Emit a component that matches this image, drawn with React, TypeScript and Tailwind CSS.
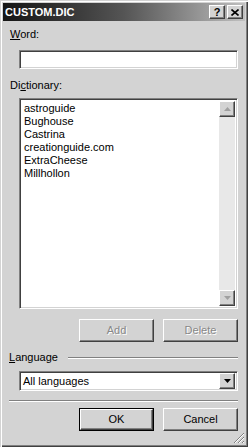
import React from 'react';

const raised =
  'bg-[#d3d3d3] border border-t-white border-l-white border-r-[#404040] border-b-[#404040] shadow-[inset_-1px_-1px_0_#808080]';
const sunken =
  'border border-t-[#808080] border-l-[#808080] border-r-white border-b-white shadow-[inset_1px_1px_0_#404040,inset_-1px_-1px_0_#d3d3d3]';

const Arrow = ({ up, disabled }: { up?: boolean; disabled?: boolean }) => (
  <svg width="7" height="4" viewBox="0 0 7 4" className={up ? '' : 'rotate-180'}>
    <path d="M3.5 0 L7 4 L0 4 Z" fill={disabled ? '#a0a0a0' : '#000'} />
  </svg>
);

const ScrollBtn = ({ up }: { up?: boolean }) => (
  <div className={`${raised} w-[16px] h-[16px] flex items-center justify-center`}>
    <Arrow up={up} disabled />
  </div>
);

const Button = ({
  label,
  disabled,
  isDefault,
}: {
  label: string;
  disabled?: boolean;
  isDefault?: boolean;
}) => (
  <div className={`w-[75px] h-[23px] ${isDefault ? 'border border-black' : ''}`}>
    <div
      className={`${raised} w-full h-full flex items-center justify-center ${
        disabled ? 'text-[#888888] [text-shadow:1px_1px_0_#ffffff]' : 'text-black'
      }`}
    >
      {label}
    </div>
  </div>
);

const words = ['astroguide', 'Bughouse', 'Castrina', 'creationguide.com', 'ExtraCheese', 'Millhollon'];

export default function App() {
  return (
    <div className="w-[248px] h-[447px] bg-[#d3d3d3] p-[3px] relative flex flex-col font-['Liberation_Sans',Arial,sans-serif] text-[11px] leading-[13px] text-black shadow-[inset_1px_1px_0_#d3d3d3,inset_2px_2px_0_#ffffff,inset_-1px_-1px_0_#404040,inset_-2px_-2px_0_#808080]">
      {/* Title bar */}
      <div className="h-[18px] flex items-center bg-gradient-to-r from-[#161616] via-[#555555] to-[#c0c0c0] pl-[2px] pr-[2px]">
        <span className="text-white font-bold text-[11px] flex-1">CUSTOM.DIC</span>
        <div className="flex gap-[2px]">
          <div className={`${raised} w-[16px] h-[14px] flex items-center justify-center font-bold text-[11px] leading-none`}>
            ?
          </div>
          <div className={`${raised} w-[16px] h-[14px] flex items-center justify-center`}>
            <svg width="8" height="7" viewBox="0 0 8 7">
              <path d="M0.5 0.5 L7.5 6.5 M7.5 0.5 L0.5 6.5" stroke="#000" strokeWidth="1.6" />
            </svg>
          </div>
        </div>
      </div>

      {/* Word */}
      <div className="mt-[7px] ml-[7px]">
        <span className="underline">W</span>ord:
      </div>
      <div className={`${sunken} bg-white mt-[9px] ml-[16px] w-[219px] h-[19px]`} />

      {/* Dictionary */}
      <div className="mt-[10px] ml-[7px]">
        Di<span className="underline">c</span>tionary:
      </div>
      <div className={`${sunken} bg-white mt-[6px] ml-[16px] w-[219px] h-[211px] p-[2px] flex`}>
        <div className="flex-1 pl-[2px] pt-[1px]">
          {words.map((w) => (
            <div key={w}>{w}</div>
          ))}
        </div>
        <div className="w-[16px] flex flex-col bg-[#e8e8e8]">
          <ScrollBtn up />
          <div className="flex-1" />
          <ScrollBtn />
        </div>
      </div>

      {/* Add / Delete */}
      <div className="mt-[10px] ml-[76px] flex gap-[9px]">
        <Button label="Add" disabled />
        <Button label="Delete" disabled />
      </div>

      {/* Language */}
      <div className="mt-[9px] ml-[6px] mr-[7px] flex items-center">
        <span className="mr-[10px]">
          <span className="underline">L</span>anguage
        </span>
        <div className="flex-1 border-t border-t-[#808080] border-b border-b-white" />
      </div>
      <div className={`${sunken} bg-white mt-[7px] ml-[16px] w-[219px] h-[20px] p-[2px] flex items-center`}>
        <span className="flex-1 pl-[1px]">All languages</span>
        <div className={`${raised} w-[16px] h-[16px] flex items-center justify-center`}>
          <Arrow />
        </div>
      </div>

      {/* Separator */}
      <div className="mt-[9px] ml-[6px] w-[229px] border-t border-t-[#808080] border-b border-b-white" />

      {/* OK / Cancel */}
      <div className="mt-[6px] ml-[76px] flex gap-[9px]">
        <Button label="OK" isDefault />
        <Button label="Cancel" />
      </div>

      {/* Size grip */}
      <svg width="12" height="12" viewBox="0 0 12 12" className="absolute right-[3px] bottom-[3px]">
        <path d="M11 1 L1 11 M11 5 L5 11 M11 9 L9 11" stroke="#808080" strokeWidth="1" />
        <path d="M11 2 L2 11 M11 6 L6 11 M11 10 L10 11" stroke="#ffffff" strokeWidth="1" />
      </svg>
    </div>
  );
}
